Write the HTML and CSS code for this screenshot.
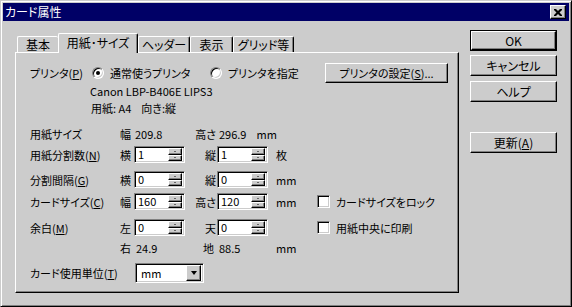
FILE: index.html
```html
<!DOCTYPE html>
<html lang="ja">
<head>
<meta charset="utf-8">
<link rel="stylesheet" href="styles.css">
</head>
<body>
<div class="window">
  <div class="titlebar">
    <span class="title">カード属性</span>
    <span class="close"><svg width="8" height="7" viewBox="0 0 8 7"><path d="M0 0h2l2 2 2-2h2v1L5.5 3.5 8 6v1H6L4 5 2 7H0V6l2.5-2.5L0 1z" fill="#000"/></svg></span>
  </div>
  <div class="client">
    <div class="tabarea">
      <div class="tabs">
        <div class="tab t1">基本</div>
        <div class="tab active">用紙･サイズ</div>
        <div class="tab t3">ヘッダー</div>
        <div class="tab t4">表示</div>
        <div class="tab t5">グリッド等</div>
      </div>
      <div class="panel">
        <div class="row r1">
          <span class="plabel">プリンタ(<u>P</u>)</span>
          <span class="rgroup g1"><span class="radio on"></span><span class="rtext">通常使うプリンタ</span></span>
          <span class="rgroup g2"><span class="radio"></span><span class="rtext">プリンタを指定</span></span>
          <span class="btn setbtn">プリンタの設定(<u>S</u>)...</span>
        </div>
        <div class="row info i1">Canon LBP-B406E LIPS3</div>
        <div class="row info i2"><span>用紙: A4</span><span class="muki">向き:縦</span></div>

        <div class="row grid r4">
          <span>用紙サイズ</span><span>幅</span><span class="val">209.8</span><span class="l2">高さ</span><span class="val2">296.9<span class="mm1">mm</span></span>
        </div>
        <div class="row grid spinrow r5">
          <span>用紙分割数(<u>N</u>)</span><span>横</span>
          <span class="spin"><span class="stext">1</span><span class="ud"><span class="up"><i class="au"></i></span><span class="dn"><i class="ad"></i></span></span></span>
          <span class="l2">縦</span>
          <span class="spin"><span class="stext">1</span><span class="ud"><span class="up"><i class="au"></i></span><span class="dn"><i class="ad"></i></span></span></span>
          <span class="unit">枚</span>
        </div>
        <div class="row grid spinrow r6">
          <span>分割間隔(<u>G</u>)</span><span>横</span>
          <span class="spin"><span class="stext">0</span><span class="ud"><span class="up"><i class="au"></i></span><span class="dn"><i class="ad"></i></span></span></span>
          <span class="l2">縦</span>
          <span class="spin"><span class="stext">0</span><span class="ud"><span class="up"><i class="au"></i></span><span class="dn"><i class="ad"></i></span></span></span>
          <span class="unit">mm</span>
        </div>
        <div class="row grid spinrow r7">
          <span>カードサイズ(<u>C</u>)</span><span>幅</span>
          <span class="spin"><span class="stext">160</span><span class="ud"><span class="up"><i class="au"></i></span><span class="dn"><i class="ad"></i></span></span></span>
          <span class="l2">高さ</span>
          <span class="spin"><span class="stext">120</span><span class="ud"><span class="up"><i class="au"></i></span><span class="dn"><i class="ad"></i></span></span></span>
          <span class="unit">mm</span>
          <span class="check"><span class="cbox"></span>カードサイズをロック</span>
        </div>
        <div class="row grid spinrow r8">
          <span>余白(<u>M</u>)</span><span>左</span>
          <span class="spin"><span class="stext">0</span><span class="ud"><span class="up"><i class="au"></i></span><span class="dn"><i class="ad"></i></span></span></span>
          <span class="l2">天</span>
          <span class="spin"><span class="stext">0</span><span class="ud"><span class="up"><i class="au"></i></span><span class="dn"><i class="ad"></i></span></span></span>
          <span class="unit"></span>
          <span class="check"><span class="cbox"></span>用紙中央に印刷</span>
        </div>
        <div class="row grid r9">
          <span></span><span>右</span><span class="val v9">24.9</span><span class="l2 l2b">地</span><span class="val v9">88.5</span><span class="unit">mm</span>
        </div>
        <div class="row r10">
          <span class="ulabel">カード使用単位(<u>T</u>)</span>
          <span class="combo"><span class="ctext">mm</span><span class="cbtn"><i class="ad big"></i></span></span>
        </div>
      </div>
    </div>
    <div class="buttons">
      <span class="btn default"><span class="inner">OK</span></span>
      <span class="btn b2">キャンセル</span>
      <span class="btn b3">ヘルプ</span>
      <span class="btn b4">更新(<u>A</u>)</span>
    </div>
  </div>
</div>
</body>
</html>
```

FILE: styles.css
```css
* { box-sizing: border-box; }
html, body { margin: 0; padding: 0; background: #cccccc; }
body {
  font-family: "Noto Sans CJK JP", "Noto Sans", sans-serif;
  font-size: 11px;
  line-height: 14px;
  color: #000;
  font-feature-settings: "palt";
  white-space: nowrap;
}
u { text-decoration: underline; text-underline-offset: 1px; }

.window {
  width: 572px;
  height: 307px;
  background: #cccccc;
  border: 1px solid;
  border-color: #cccccc #000 #000 #cccccc;
  box-shadow: inset 1px 1px #fff, inset -1px -1px #808080;
  padding: 2px;
}

.titlebar {
  height: 18px;
  background: #000066;
  color: #fff;
  display: flex;
  align-items: center;
  justify-content: space-between;
  padding: 0 3px 0 2px;
}
.title { font-size: 12px; }
.close {
  width: 16px;
  height: 14px;
  background: #cccccc;
  border: 1px solid;
  border-color: #fff #000 #000 #fff;
  box-shadow: inset -1px -1px #808080;
  display: flex;
  align-items: center;
  justify-content: center;
  padding-right: 1px;
}

.client { display: flex; }

.tabarea { margin-left: 12px; width: 444px; }

.tabs {
  margin-top: 12px;
  height: 19px;
  display: flex;
  align-items: flex-end;
  padding-left: 2px;
}
.tab {
  height: 16px;
  border: 1px solid;
  border-color: #fff #000 transparent #fff;
  border-bottom: none;
  border-radius: 2px 2px 0 0;
  box-shadow: inset -1px 0 #808080;
  display: flex;
  align-items: center;
  justify-content: center;
  padding-top: 1px;
  font-size: 12px;
}
.t1 { width: 41px; border-right: none; box-shadow: none; }
.active {
  width: 80px;
  height: 20px;
  margin-bottom: -1px;
  background: #cccccc;
  position: relative;
  z-index: 1;
  padding-bottom: 2px;
}
.t3 { width: 52px; }
.t4 { width: 43px; }
.t5 { width: 61px; }

.panel {
  height: 241px;
  border: 1px solid;
  border-color: #fff #000 #000 #fff;
  box-shadow: inset -1px -1px #808080;
  padding-left: 14px;
  display: flex;
  flex-direction: column;
}

.row { display: flex; align-items: center; }

.r1 { margin-top: 9px; height: 21px; }
.plabel { width: 62px; }
.rgroup { display: flex; align-items: center; }
.g1 { width: 118px; }
.g2 { width: 115px; }
.radio {
  width: 12px;
  height: 12px;
  border-radius: 50%;
  background: #fff;
  border: 1px solid;
  border-color: #808080 #fff #fff #808080;
  box-shadow: inset 1px 1px #000, inset -1px -1px #cccccc;
  position: relative;
  flex: none;
}
.radio.on::after {
  content: "";
  position: absolute;
  left: 3px;
  top: 3px;
  width: 4px;
  height: 4px;
  border-radius: 50%;
  background: #000;
}
.rtext { margin-left: 6px; }
.btn {
  display: flex;
  align-items: center;
  justify-content: center;
  height: 21px;
  background: #cccccc;
  border: 1px solid;
  border-color: #fff #000 #000 #fff;
  box-shadow: inset -1px -1px #808080;
}
.setbtn { width: 123px; height: 20px; }

.info { height: 14px; padding-left: 60px; }
.i1 { margin-top: 1px; }
.i2 { margin-top: 3px; padding-left: 61px; }
.muki { margin-left: 10px; }

.grid {
  display: grid;
  grid-template-columns: 90px 14px 51px 32px 51px 49px auto;
  align-items: center;
}
.l2 { text-align: right; padding-right: 1px; }
.val { padding-left: 1px; }
.v9 { padding-left: 2px; }
.val2 { padding-left: 2px; display: flex; }
.mm1 { margin-left: 10px; }
.unit { padding-left: 8px; }

.r4 { margin-top: 12px; height: 14px; }
.r5 { margin-top: 5px; height: 17px; }
.r6 { margin-top: 8px; height: 17px; }
.r7 { margin-top: 5px; height: 17px; }
.r8 { margin-top: 9px; height: 17px; }
.r9 { margin-top: 5px; height: 14px; }
.l2b { padding-right: 3px; }

.spin {
  height: 17px;
  background: #fff;
  border: 1px solid;
  border-color: #808080 #fff #fff #808080;
  box-shadow: inset 1px 1px #000, inset -1px -1px #cccccc;
  display: flex;
  padding: 2px 2px 2px 3px;
  align-items: center;
  justify-content: space-between;
}
.stext { line-height: 13px; }
.ud {
  width: 14px;
  height: 13px;
  display: flex;
  flex-direction: column;
}
.up, .dn {
  flex: 1;
  background: #cccccc;
  border: 1px solid;
  border-color: #fff #000 #000 #fff;
  box-shadow: inset -1px -1px #808080;
  display: flex;
  align-items: center;
  justify-content: center;
}
.au, .ad { display: block; width: 0; height: 0; border-left: 1.5px solid transparent; border-right: 1.5px solid transparent; }
.au { border-bottom: 1.5px solid #000; }
.ad { border-top: 1.5px solid #000; }

.check { display: flex; align-items: center; }
.cbox {
  width: 13px;
  height: 13px;
  background: #fff;
  border: 1px solid;
  border-color: #808080 #fff #fff #808080;
  box-shadow: inset 1px 1px #000, inset -1px -1px #cccccc;
  margin-right: 6px;
}

.r10 { margin-top: 8px; height: 20px; }
.ulabel { width: 105px; }
.combo {
  width: 69px;
  height: 20px;
  background: #fff;
  border: 1px solid;
  border-color: #808080 #fff #fff #808080;
  box-shadow: inset 1px 1px #000, inset -1px -1px #cccccc;
  display: flex;
  align-items: center;
  justify-content: space-between;
  padding: 2px;
}
.ctext { padding-left: 3px; }
.cbtn {
  width: 15px;
  height: 16px;
  background: #cccccc;
  border: 1px solid;
  border-color: #fff #000 #000 #fff;
  box-shadow: inset -1px -1px #808080;
  display: flex;
  align-items: center;
  justify-content: center;
}
.ad.big { border-left-width: 3.5px; border-right-width: 3.5px; border-top-width: 4px; }

.buttons {
  margin-left: 11px;
  width: 87px;
  display: flex;
  flex-direction: column;
  margin-top: 9px;
  font-size: 12px;
}
.btn.default {
  border: 1px solid #000;
  box-shadow: none;
  padding: 0;
}
.default .inner {
  width: 100%;
  height: 100%;
  display: flex;
  align-items: center;
  justify-content: center;
  border: 1px solid;
  border-color: #fff #000 #000 #fff;
  box-shadow: inset -1px -1px #808080;
}
.b2 { margin-top: 4px; }
.b3 { margin-top: 5px; }
.b4 { margin-top: 30px; }
```
